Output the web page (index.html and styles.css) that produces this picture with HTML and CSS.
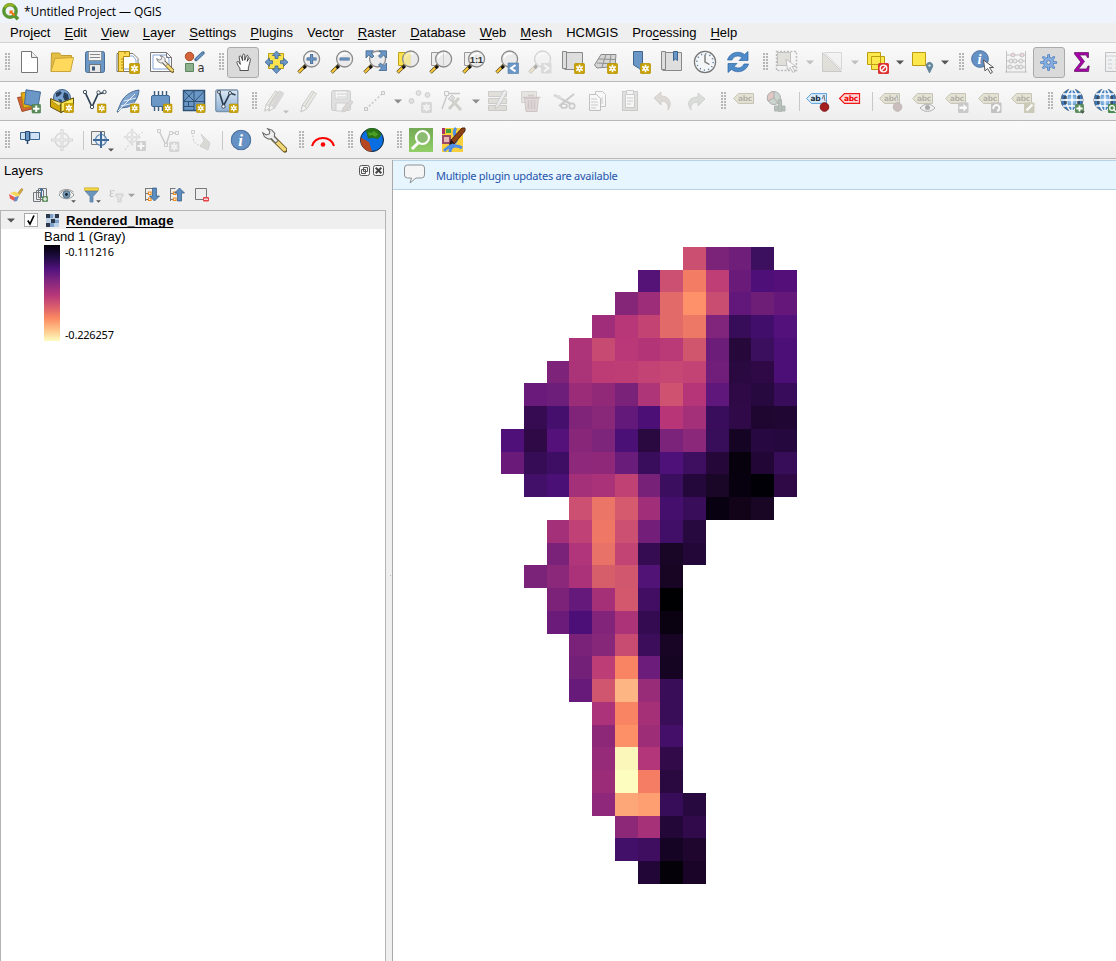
FILE: index.html
```html
<!DOCTYPE html>
<html lang="en">
<head>
<meta charset="utf-8">
<title>*Untitled Project — QGIS</title>
<link rel="stylesheet" href="styles.css">
</head>
<body>
<svg class="defs" aria-hidden="true">
  <defs>
    <linearGradient id="g-blue" x2="1" y2="1"><stop stop-color="#a9c6e8"/><stop offset="1" stop-color="#4878b0"/></linearGradient>
    <linearGradient id="g-pale" x2="0" y2="1"><stop stop-color="#dce8f5"/><stop offset="1" stop-color="#8fb0d6"/></linearGradient>
    <linearGradient id="g-green" x2="0" y2="1"><stop stop-color="#74a956"/><stop offset="1" stop-color="#92cf67"/></linearGradient>
    <radialGradient id="g-globe"><stop stop-color="#b5d8fb"/><stop offset="1" stop-color="#2667ad"/></radialGradient>
    <symbol id="star" viewBox="0 0 10 10"><rect x=".3" y=".3" width="9.4" height="9.4" rx="1.4" fill="#c8a205" stroke="#b18e00" stroke-width=".6"/><path d="M5 1.5v7M2 3.2l6 3.6M8 3.2L2 6.8" stroke="#fff" stroke-width="1.5"/><circle cx="5" cy="5" r="1.9" fill="#fff"/><circle cx="5" cy="5" r=".7" fill="#c8a205"/></symbol>
    <symbol id="plus" viewBox="0 0 10 10"><rect x=".3" y=".3" width="9.4" height="9.4" rx="1.4" fill="#5a8c5a" stroke="#4c7d50" stroke-width=".6"/><path d="M5 1.6v6.8M1.6 5h6.8" stroke="#fff" stroke-width="2"/></symbol>
    <symbol id="handle-mag" viewBox="0 0 24 24"><path d="M1.5 22.5L9 15" stroke="#5f5130" stroke-width="3.4"/><path d="M1.8 22.2L7 17" stroke="#fbc832" stroke-width="2"/><path d="M6.6 16.2l2 2" stroke="#111" stroke-width="3"/></symbol>
    <symbol id="mag" viewBox="0 0 24 24"><use href="#handle-mag"/><circle cx="14.6" cy="9" r="8" fill="#e9e9e9" fill-opacity=".88" stroke="#8b8b8b" stroke-width="1.3"/><path d="M9 8a6 6 0 0 1 8-4" stroke="#fff" stroke-width="1.6" fill="none"/></symbol>
    <symbol id="tag" viewBox="0 0 24 24"><path d="M.6 9.5L5.5 4.6h15v9.8h-15z" fill="#dcdac2" stroke="#aaa892"/><text x="5" y="12.4" class="tag-text">abc</text></symbol>
    <symbol id="wrench" viewBox="0 0 24 24"><path d="M11 10l11 11" stroke="#6a5724" stroke-width="5.4" stroke-linecap="round"/><path d="M12 11l9.5 9.5" stroke="#f2d777" stroke-width="3.6" stroke-linecap="round"/><path d="M5.5.8l4 1.2 2.8 3.2-.5 3 3.6 3.8-2.4 2.4-3.8-4-3.4.2L2.300 8.400.800 4.700l3.400 2 2.800-1 .5-2.500z" fill="#eee" stroke="#666"/></symbol>
    <symbol id="pencil" viewBox="0 0 24 24"><path d="M4 23l1.500-7L15 2l4.500 2.500-9.500 15z" fill="#d9d5b6" stroke="#77756c"/><path d="M4 23l1.500-7 4.500 3.500zM8 17l9-14" fill="#fff" stroke="#77756c"/></symbol>
    <symbol id="target" viewBox="0 0 24 24"><circle cx="12" cy="12" r="7" fill="#f5f5f5" stroke="#9a9a9a" stroke-width="1.500"/><path d="M12 1v22M1 12h22" stroke="#9a9a9a" stroke-width="3"/><path d="M12 2v20M2 12h20" stroke="#eee" stroke-width="1"/></symbol>
    <symbol id="globe" viewBox="0 0 24 24"><circle cx="12" cy="11" r="11" fill="url(#g-globe)" stroke="#6b7884"/><path d="M12 0v22M1 11h22M3 5h18M3 17h18" stroke="#fff" stroke-width="1.300"/><ellipse cx="12" cy="11" rx="5.500" ry="11" fill="none" stroke="#fff" stroke-width="1.500"/><path d="M4 7h3v3H3zM4 12h3v3H4zM17 7h3v3h-3zM17 12h3v3h-3z" fill="#26303a" opacity=".65"/></symbol>
    <symbol id="cursor" viewBox="0 0 12 15"><path d="M1 1l1.500 11 2.500-2.500 3 5 2-1.300-3-4.700h4z" fill="#fff" stroke="#555"/></symbol>
    <symbol id="info" viewBox="0 0 20 20"><circle cx="10" cy="10" r="9.300" fill="#6591c4" stroke="#466d9c"/><text x="7.300" y="15.500" class="info-text">i</text></symbol>
    <symbol id="down" viewBox="0 0 8 5"><path d="M0 .5h8L4 4.500z" fill="#555"/></symbol>
  </defs>
</svg>

<header class="titlebar">
  <svg class="logo" viewBox="0 0 18 18"><circle cx="8" cy="8" r="6.200" fill="none" stroke="#589632" stroke-width="3.400"/><path d="M2.500 4.500A6.500 6.500 0 0 1 12 3" fill="none" stroke="#93b023" stroke-width="2.500"/><path d="M11 11l5 5.200" stroke="#589632" stroke-width="3.600"/><path d="M7.500 7.500h4l-1.200 1.300 3 3-1.500 1.500-3-3-1.300 1.200z" fill="#ee7913"/></svg>
  <span>*Untitled Project — QGIS</span>
</header>

<nav class="menubar">
  <span>Pro<u>j</u>ect</span><span><u>E</u>dit</span><span><u>V</u>iew</span><span><u>L</u>ayer</span><span><u>S</u>ettings</span><span><u>P</u>lugins</span><span>Vect<u>o</u>r</span><span><u>R</u>aster</span><span><u>D</u>atabase</span><span><u>W</u>eb</span><span><u>M</u>esh</span><span>HCMGIS</span><span>Pro<u>c</u>essing</span><span><u>H</u>elp</span>
</nav>

<div class="toolbar">
  <i class="grip first"></i>
  <svg class="tb" viewBox="-4 -7 33 38"><path d="M4.500 1.500h10l6 6v15h-16z" fill="#fff" stroke="#777"/><path d="M14.500 1.500v6h6" fill="#eee" stroke="#777"/></svg>
  <svg class="tb" viewBox="-4 -7 33 38"><path d="M1 21.500L1.500 3h8l2 2.500h10V9" fill="#e4bd45" stroke="#c09b30"/><path d="M1 21.500l4-13 18.500-1-3 14z" fill="#ffd95c" stroke="#c9a53b"/></svg>
  <svg class="tb" viewBox="-4 -7 33 38"><rect x="2.500" y="1.500" width="19" height="21" rx="2" fill="#6b97c7" stroke="#4a6d94"/><path d="M5.500 1.500h13v9h-13z" fill="#f3f3f3" stroke="#777" stroke-width=".6"/><path d="M7 4.500h10M7 7.500h10" stroke="#888"/><path d="M6.500 14.500h11v8h-11z" fill="#e8e8e8" stroke="#555" stroke-width=".7"/><path d="M9 16.500h3v4H9z" fill="#3d5977"/></svg>
  <svg class="tb" viewBox="-4 -7 33 38"><path d="M1 3.500h16l5 5v13H1z" fill="#fff" stroke="#777"/><path d="M4 6h13l3 4v9H4z" fill="#fff" stroke="#86a5d8"/><path d="M2.500 1.500h11v5h-6v15h-5z" fill="#fcd950" stroke="#a98816"/><path d="M5 9h2M5 12h2M5 15h2M5 18h2M9 2v2" stroke="#a98816"/><use href="#star" x="13" y="13" width="11" height="11"/></svg>
  <svg class="tb" viewBox="-4 -7 33 38"><path d="M1.500 2.500h16l5 5v14h-21z" fill="#fff" stroke="#777"/><path d="M4 5h13l3 4v10H4z" fill="#fff" stroke="#86a5d8"/><path d="M17.500 2.500v5h5" fill="none" stroke="#777"/><use href="#wrench" x="7" y="5" width="18" height="18"/></svg>
  <svg class="tb" viewBox="-4 -7 33 38"><circle cx="7.500" cy="6.500" r="4.200" fill="#d4653a" stroke="#a94a25"/><path d="M14 9.500l7-6.500" stroke="#44688f" stroke-width="3.400" stroke-linecap="round"/><path d="M14 9.500l7-6.500" stroke="#6b97c7" stroke-width="1.800"/><path d="M3.500 13.500h8v8h-8z" fill="#8db18c" stroke="#5c8561"/><text x="15.500" y="21.500" class="glyph-a">a</text></svg>
  <i class="grip"></i>
  <svg class="tb pressed" viewBox="-4 -7 33 38"><path d="M7.500 22.500v-3C5.500 17.500 4 14 3.500 12c0-1.500 2-2 3 0l1.500 2.500L6.500 5c0-2 2-2.500 2.700-.5L11 9.500V2.500c.2-2 2.500-2 2.800 0V9L16 3.500c.8-1.700 2.500-1 2.300.8L17 10.500l2-3.500c1-1.400 2.500-.5 2.200 1-.3 3-1.700 7-2.700 11v3.500z" fill="#fff" stroke="#222" transform="translate(1 0)"/></svg>
  <svg class="tb" viewBox="-4 -7 33 38"><path d="M4.500 3.500h15v15h-15z" fill="#fce34d" stroke="#bc9c10"/><g fill="#6b97c7" stroke="#3c648e" stroke-width=".8"><path d="M12.500 1l4.200 4.500H14v3h-3v-3H8.300z"/><path d="M12.500 23.500l4.200-4.500H14v-3h-3v3H8.300z"/><path d="M1 12.200L5.500 8v2.700h3v3h-3v2.700z"/><path d="M24 12.200L19.500 8v2.700h-3v3h3v2.700z"/></g></svg>
  <svg class="tb" viewBox="-4 -7 33 38"><use href="#mag" width="24" height="24"/><path d="M14.600 4v10M9.600 9h10" stroke="#41658e" stroke-width="3"/><path d="M14.600 4.600v8.800M10.200 9H19" stroke="#6b97c7" stroke-width="1.600"/></svg>
  <svg class="tb" viewBox="-4 -7 33 38"><use href="#mag" width="24" height="24"/><path d="M9.600 9h10" stroke="#41658e" stroke-width="3"/><path d="M10.200 9H19" stroke="#6b97c7" stroke-width="1.600"/></svg>
  <svg class="tb" viewBox="-4 -7 33 38"><use href="#mag" width="24" height="24"/><g fill="#6b97c7" stroke="#41658e" stroke-width=".8"><path d="M3 .800h7.500L8 3l3 3-2 2-3.200-3L3 8z"/><path d="M23.500.800H16L18.500 3l-3 3 2 2 3.200-3 2.800 3z"/><path d="M23.500 20.500H16l2.500-2.500-3-3 2-2 3.200 3 2.800-3z"/></g></svg>
  <svg class="tb" viewBox="-4 -7 33 38"><path d="M2.500 2.500h12v13h-12z" fill="#fce34d" stroke="#c0a11a"/><use href="#mag" width="24" height="24"/><path d="M8 4.500l6.500-2v13L8 14z" fill="#f3e67c" opacity=".65"/></svg>
  <svg class="tb" viewBox="-4 -7 33 38"><path d="M2.500 2.500h12v13h-12z" fill="#eee" stroke="#999"/><use href="#mag" width="24" height="24"/><path d="M14.500 3v12.500" stroke="#ccc"/></svg>
  <svg class="tb" viewBox="-4 -7 33 38"><path d="M2.500 2.500h12v13h-12z" fill="#eee" stroke="#999"/><use href="#mag" width="24" height="24"/><text x="7.800" y="12.500" class="ratio">1:1</text></svg>
  <svg class="tb" viewBox="-4 -7 33 38"><use href="#mag" width="24" height="24"/><path d="M13 13h10.500v10.500H13z" fill="#6b97c7" stroke="#4a76a6" stroke-width=".6"/><path d="M20.500 15L16 18.200l4.500 3.200" fill="none" stroke="#fff" stroke-width="2"/></svg>
  <svg class="tb off" viewBox="-4 -7 33 38"><use href="#mag" width="24" height="24"/><path d="M13 13h10.500v10.500H13z" fill="#aaa"/><path d="M16 15l4.500 3.200-4.500 3.200" fill="none" stroke="#fff" stroke-width="2"/></svg>
  <svg class="tb" viewBox="-4 -7 33 38"><path d="M1.500 1.500h4v17h-4zM5.500 2.500h16v17h-18" fill="#dedede" stroke="#888"/><use href="#star" x="13" y="13" width="11" height="11"/></svg>
  <svg class="tb" viewBox="-4 -7 33 38"><path d="M7 4.500h15l-1 12-18 1.500-2.500-3z" fill="#d5d5d5" stroke="#888"/><path d="M4.500 9l17 .5M3 13l18 1M12 4.500L8 17M17 4.500L15.500 16" stroke="#909090" fill="none"/><use href="#star" x="13" y="13" width="11" height="11"/></svg>
  <svg class="tb" viewBox="-4 -7 33 38"><path d="M6.500 1.500h9v20l-4-3.500-5-3z" fill="#6b97c7" stroke="#41658e"/><use href="#star" x="13" y="13" width="11" height="11"/></svg>
  <svg class="tb" viewBox="-4 -7 33 38"><path d="M1.500 1.500h4v18h-4zM5.500 2.500h16v18h-19" fill="#dedede" stroke="#888"/><path d="M13.500 1.500h4v9l-2-1.500-2 1.500z" fill="#6b97c7" stroke="#3c648e"/></svg>
  <svg class="tb" viewBox="-4 -7 33 38"><circle cx="12" cy="12" r="10.600" fill="#f4f6f7" stroke="#767676" stroke-width="1.200"/><circle cx="12" cy="12" r="8.200" fill="none" stroke="#527da6" stroke-width="1.500" stroke-dasharray="1.100 3.200"/><path d="M12 4.500V12l4.500 2.500" fill="none" stroke="#777" stroke-width="1.400"/></svg>
  <svg class="tb" viewBox="-4 -7 33 38"><g fill="#4f8bc8" stroke="#2d66a5" stroke-width=".7"><path d="M1.500 10C3 3.500 12-.5 18.500 4.500L22 1.500v9h-9l3-3C11.500 4.500 7.500 6.500 6 10z"/><path d="M22.500 14C21 20.500 12 24.500 5.500 19.500L2 22.500v-9h9l-3 3c4.500 3 8.500 1 10-2.500z"/></g></svg>
  <i class="grip"></i>
  <svg class="tb off" viewBox="-4 -7 33 38"><path d="M1.500 1.500h20v19h-20z" fill="none" stroke="#444" stroke-dasharray="2 1.500" stroke-width="1.500"/><path d="M2.500 2.500h13v13h-13z" fill="#bcb693" stroke="#555"/><use href="#cursor" x="10" y="8" width="12" height="15"/></svg><svg class="arrow off" viewBox="0 0 12 38"><use href="#down" x="2" y="17" width="8" height="5"/></svg>
  <svg class="tb off" viewBox="-4 -7 33 38"><path d="M2.500 2.500v19h19z" fill="#bcb693" stroke="#777"/><path d="M4.500 2.500h17v17z" fill="#eee" stroke="#999"/></svg><svg class="arrow off" viewBox="0 0 12 38"><use href="#down" x="2" y="17" width="8" height="5"/></svg>
  <svg class="tb" viewBox="-4 -7 33 38"><path d="M2.500 2.500h13v12h-13zM6.500 6.500h13v13h-13z" fill="#fce74d" stroke="#bc9c10"/><rect x="13" y="13" width="11" height="11" rx="1.500" fill="#d33"/><circle cx="18.500" cy="18.500" r="3.300" fill="none" stroke="#fff" stroke-width="1.300"/><path d="M16.300 20.700l4.400-4.400" stroke="#fff" stroke-width="1.300"/></svg><svg class="arrow" viewBox="0 0 12 38"><use href="#down" x="2" y="17" width="8" height="5"/></svg>
  <svg class="tb" viewBox="-4 -7 33 38"><path d="M2.500 2.500h13v13h-13z" fill="#fce74d" stroke="#bc9c10"/><path d="M19.500 23l-3-6a3.300 3.300 0 1 1 6 0z" fill="#65879b" stroke="#4b6f85" stroke-width=".6"/><circle cx="19.500" cy="15.600" r="1.200" fill="#d9e5ec"/></svg><svg class="arrow" viewBox="0 0 12 38"><use href="#down" x="2" y="17" width="8" height="5"/></svg>
  <i class="grip"></i>
  <svg class="tb" viewBox="-4 -7 33 38"><use href="#info" x="0" y="0" width="18" height="18"/><use href="#cursor" x="11.500" y="9" width="12" height="15"/></svg>
  <svg class="tb off2" viewBox="-4 -7 33 38"><path d="M2.500 1v21M21.500 1v21M1 22h22M2 5h20M2 11h20M2 17h20" stroke="#777" fill="none"/><g fill="#ddd" stroke="#777"><circle cx="9" cy="5" r="2" fill="#eab"/><circle cx="18" cy="5" r="2" fill="#eab"/><circle cx="7" cy="11" r="2"/><circle cx="11" cy="11" r="2"/><circle cx="17" cy="11" r="2"/><circle cx="6" cy="17" r="2"/><circle cx="13" cy="17" r="2"/><circle cx="17" cy="17" r="2"/></g></svg>
  <svg class="tb pressed" viewBox="-4 -7 33 38"><g stroke="#3d74ba" stroke-width="3.600" stroke-linecap="round"><path d="M12 2.500v19M2.500 12h19M5.300 5.300l13.400 13.400M5.300 18.700L18.700 5.300"/></g><circle cx="12" cy="12" r="6.800" fill="#88afe0" stroke="#3d74ba"/><g stroke="#88afe0" stroke-width="1.900" stroke-linecap="round"><path d="M12 2.500v19M2.500 12h19M5.300 5.300l13.400 13.400M5.300 18.700L18.700 5.300"/></g><circle cx="12" cy="12" r="2.500" fill="#dcdcdc" stroke="#3d74ba"/></svg>
  <svg class="tb" viewBox="-4 -7 33 38"><path d="M4.500 2.500h14v5h-1.200l-1-2.500H9.500l5 6.500-6 7.500h8l1.500-3h1.200l-.7 5.500h-14v-1.500l6.300-8L4.500 4z" fill="#a600a6" stroke="#68206c" stroke-width=".8"/></svg>
  <svg class="tb off2" viewBox="-4 -7 33 38"><path d="M2.500 2.500h20v19h-20z" fill="#eee" stroke="#777"/><path d="M3 6h18M5 10h4m3 0h8M5 14h4m3 0h8M5 18h4m3 0h8" stroke="#89a"/></svg>
</div>

<div class="toolbar">
  <i class="grip first"></i>
  <svg class="tb" viewBox="-4 -7 33 38"><path d="M.500 8.500l13-2 3 13-11.500 3z" fill="#d36636" stroke="#a24a24"/><path d="M4 4l12-2 2 15-11.500 2z" fill="#e6ae12" stroke="#a88011"/><path d="M9 .800L23.500 3 21 18 7.500 15z" fill="#6b97c7" stroke="#426c99"/><use href="#plus" x="14.500" y="15" width="9.500" height="9.500"/></svg>
  <svg class="tb" viewBox="-4 -7 33 38"><circle cx="12" cy="9" r="8.500" fill="#7ba4d2" stroke="#44658b"/><path d="M6 4l4-2 2 2-3 3-3 1zM14 3l4 2 1 5-4 2-2-4zM8 10l4 1-1 4z" fill="#28405e"/><path d="M.500 9.500L11 14v9.500L.5 18zM11 14l12.500-5v8L11 23.500z" fill="#d3a90a" stroke="#665417"/><path d="M11 14l12.500-5v8L11 23.500z" fill="#f9e956" stroke="#665417"/><path d="M11 14L9 17 .5 11" fill="#f8e87e" stroke="#8f7820" stroke-width=".6"/><use href="#star" x="14" y="14" width="10" height="10"/></svg>
  <svg class="tb" viewBox="-4 -7 33 38"><path d="M2 3l7 15 6-13 7-1.500" fill="none" stroke="#2d4053" stroke-width="1.700"/><g fill="#fff" stroke="#3c4b59"><circle cx="2" cy="3" r="1.700"/><circle cx="9" cy="18" r="1.700"/><circle cx="15.500" cy="3.500" r="1.700"/><circle cx="21.500" cy="3" r="1.700"/></g><use href="#star" x="14" y="14.500" width="9.500" height="9.500"/></svg>
  <svg class="tb" viewBox="-4 -7 33 38"><path d="M1 23L4 16C7 7 15 2 23 1c-.5 7-4 14-11 17l-7 1-3.500 4.500" fill="url(#g-blue)" stroke="#4a6f98"/><path d="M2 22L19 5M5 17l13-3M8 12l12-3" fill="none" stroke="#e5eef8"/><use href="#star" x="14" y="14.500" width="9.500" height="9.500"/></svg>
  <svg class="tb" viewBox="-4 -7 33 38"><path d="M5.500 2v20M9.500 2v20M13.500 2v20M17.500 2v20" stroke="#3d5c7d" stroke-width="1.400"/><rect x="2.500" y="6.500" width="18" height="11" rx="1.500" fill="#6b97c7" stroke="#3d6691"/><use href="#star" x="14" y="14.500" width="9.500" height="9.500"/></svg>
  <svg class="tb" viewBox="-4 -7 33 38"><path d="M1.500 1.500h21v20h-21z" fill="#6b97c7" stroke="#2f5275" stroke-width="1.500"/><path d="M12 1.500v20M1.500 12.500h21M1.500 1.500l11 11L22.500 2M12 1.500L1.500 12.500M1.500 17.500H12M6.500 12.500v5" fill="none" stroke="#2f5275"/><use href="#star" x="14" y="14.500" width="9.500" height="9.500"/></svg>
  <svg class="tb" viewBox="-4 -7 33 38"><rect x=".8" y="1" width="22" height="21.500" rx="1.500" fill="url(#g-pale)" stroke="#7c93ac" stroke-width="1.400"/><path d="M4 2l4.500 15L15 4l5.500 2" fill="none" stroke="#2d4053" stroke-width="1.700"/><g fill="#fff" stroke="#3c4b59"><circle cx="4" cy="3" r="1.500"/><circle cx="8.500" cy="17.500" r="1.700"/><circle cx="15" cy="4" r="1.500"/></g><use href="#star" x="14" y="14.500" width="9.500" height="9.500"/></svg>
  <i class="grip"></i>
  <svg class="tb off" viewBox="-4 -7 33 38"><use href="#pencil" x="-3" width="23" height="23"/><use href="#pencil" x="1" width="23" height="23"/><path d="M7 17l8-14 5 2-9 15z" fill="#a99"/><use href="#down" x="19" y="21" width="6" height="4"/></svg>
  <svg class="tb off" viewBox="-4 -7 33 38"><use href="#pencil" width="24" height="24"/></svg>
  <svg class="tb off" viewBox="-4 -7 33 38"><rect x="1.500" y="1.500" width="19" height="20" rx="2" fill="#b7b7b7" stroke="#777"/><path d="M5 2h12v8H5zM6 14h10v8H6z" fill="#f4f4f4" stroke="#888"/><path d="M7 5h9M7 8h9" stroke="#888"/><path d="M12 23l1-4 7-8 3 2-7 9z" fill="#b79c93" stroke="#888"/></svg>
  <svg class="tb off" viewBox="-4 -7 33 38"><path d="M3 20L20 4" stroke="#666" stroke-dasharray="2 2" stroke-width="1.500"/><path d="M1.500 18.500h3v3h-3zM18.500 2.500h3v3h-3z" fill="#ddd" stroke="#666"/></svg><svg class="arrow mid" viewBox="0 0 12 38"><use href="#down" x="2" y="17" width="8" height="5"/></svg>
  <svg class="tb off" viewBox="-4 -7 33 38"><g fill="#bbb" stroke="#777"><circle cx="3.500" cy="12" r="2.400"/><circle cx="10.500" cy="4" r="2.400"/><circle cx="19.500" cy="6" r="2.400"/></g><g class="gray"><use href="#star" x="13" y="13" width="11" height="11"/></g></svg>
  <svg class="tb off" viewBox="-4 -7 33 38"><path d="M6 6L1 20M6 4.500h13" fill="none" stroke="#666" stroke-width="1.300"/><path d="M3.500 2.500h4v4h-4z" fill="#eee" stroke="#666"/><path d="M8 20L18 9M9 9l11 12" stroke="#8b876d" stroke-width="3"/><path d="M7 10l4-4 3 3-4 3z" fill="#aaa" stroke="#777"/></svg><svg class="arrow mid" viewBox="0 0 12 38"><use href="#down" x="2" y="17" width="8" height="5"/></svg>
  <svg class="tb off" viewBox="-4 -7 33 38"><path d="M2.500 2.500h18v5h-18zM2.500 9.500h18v5h-18zM2.500 16.500h18v5h-18z" fill="#b8b28e" stroke="#777"/><path d="M9 20l1-4L18 1l3 2-8 14z" fill="#ddd" stroke="#777"/></svg>
  <svg class="tb off" viewBox="-4 -7 33 38"><path d="M2.500 2.500h15v11h-15z" fill="#c9c1a9" stroke="#988"/><path d="M5.500 9.500h14l-1.500 13H7z" fill="#c99" stroke="#966"/><path d="M3.500 8.500h18M9 6.500h6M9.500 11v9M12.500 11v9M15.500 11v9" stroke="#966" stroke-width="1.500"/></svg>
  <svg class="tb off" viewBox="-4 -7 33 38"><path d="M2 6l17 9M7 17L22 5" stroke="#777" stroke-width="2"/><circle cx="20" cy="17" r="2.700" fill="none" stroke="#777" stroke-width="1.700"/><path d="M1 7l10 4-3-5z" fill="#aaa"/><ellipse cx="12" cy="17" rx="3" ry="2" fill="none" stroke="#777" stroke-width="1.700"/></svg>
  <svg class="tb off" viewBox="-4 -7 33 38"><path d="M10.500 2.500h7l3 3v12h-10z" fill="#fff" stroke="#666"/><path d="M4.500 5.500h7l4 4v12h-11z" fill="#fff" stroke="#555"/><path d="M6 10h6M6 13h7M6 16h7M6 19h5M17 8v7" stroke="#777"/></svg>
  <svg class="tb off" viewBox="-4 -7 33 38"><rect x="4.500" y="2.500" width="15" height="19" fill="#b5b3a2" stroke="#777"/><path d="M7.500 5.500h9v13h-9z" fill="#fff" stroke="#777"/><path d="M8.500 1.500h7v4h-7zM9 9h6M9 12h6M9 15h4" fill="#eee" stroke="#777"/></svg>
  <svg class="tb off" viewBox="-4 -7 33 38"><path d="M3 9l7-6v4c8 0 12 7 7 14 1-6-2-9-7-9v4z" fill="#b7a08d" stroke="#977e70"/></svg>
  <svg class="tb off" viewBox="-4 -7 33 38"><path d="M21 10l-7-6v4C5 8 2 14 7 21c-1-5 2-8 7-8v4z" fill="#9eae9d" stroke="#799080"/></svg>
  <i class="grip"></i>
  <svg class="tb off3" viewBox="-4 -7 33 38"><use href="#tag" width="24" height="24"/></svg>
  <svg class="tb off3" viewBox="-4 -7 33 38"><circle cx="8" cy="9" r="6.500" fill="#b8c4bc" stroke="#888"/><path d="M8 9V2.500A6.500 6.500 0 0 0 2 12zM8 9l4 5" fill="#d5b0a8" stroke="#888"/><path d="M12.500 10.500h3v12h-3zM16 17h3v5h-3zM8.500 17h3.500v5H8.500z" fill="#98a79a" stroke="#8a9791"/></svg>
  <i class="sep"></i>
  <svg class="tb" viewBox="-4 -7 33 38"><path d="M.6 9.500L5.500 4.600h15v9.800h-15z" fill="#d8ecfc" stroke="#5aa1de"/><text x="4.500" y="12.400" class="tag-text dark">ab</text><path d="M16 10l2-4 1 6" fill="#dde" stroke="#777"/><circle cx="18.500" cy="18" r="4.300" fill="#a51e20" stroke="#7d1719"/></svg>
  <svg class="tb" viewBox="-4 -7 33 38"><path d="M.6 9.500L5.500 4.600h15v9.800h-15z" fill="#ffdada" stroke="#f01818" stroke-width="1.200"/><text x="5" y="12.400" class="tag-text red">abc</text></svg>
  <i class="sep"></i>
  <svg class="tb off3" viewBox="-4 -7 33 38"><use href="#tag" width="24" height="24"/><path d="M16 11l2-5 1 6" fill="#ddd" stroke="#999"/><circle cx="18.500" cy="18" r="4.300" fill="#b5a2a2" stroke="#a19393"/></svg>
  <svg class="tb off3" viewBox="-4 -7 33 38"><use href="#tag" width="24" height="24"/><path d="M8 19c4-5 11-5 15 0-4 4.500-11 4.500-15 0z" fill="#eee" stroke="#888"/><circle cx="15.500" cy="18.500" r="2.500" fill="#888"/></svg>
  <svg class="tb off3" viewBox="-4 -7 33 38"><use href="#tag" width="24" height="24"/><rect x="13" y="13.500" width="10.500" height="10.500" rx="1" fill="#b4b4b4"/><path d="M14.500 17.500h4V15l4 3.700-4 3.700V20h-4z" fill="#fff"/></svg>
  <svg class="tb off3" viewBox="-4 -7 33 38"><use href="#tag" width="24" height="24"/><rect x="13" y="13.500" width="10.500" height="10.500" rx="1" fill="#aaa"/><path d="M15.500 20a3 3 0 1 1 3.500 2" fill="none" stroke="#fff" stroke-width="2"/></svg>
  <svg class="tb off3" viewBox="-4 -7 33 38"><use href="#tag" width="24" height="24"/><rect x="13" y="13.500" width="10.500" height="10.500" rx="1" fill="#b8b49b"/><path d="M15.500 21.500l6-6" stroke="#fff" stroke-width="2.400"/></svg>
  <i class="grip"></i>
  <svg class="tb" viewBox="-4 -7 33 38"><use href="#globe" width="24" height="24"/><use href="#plus" x="15" y="15" width="9" height="9"/><use href="#down" x="20" y="22" width="5" height="3"/></svg>
  <svg class="tb" viewBox="-4 -7 33 38"><use href="#globe" width="24" height="24"/><rect x="15" y="15" width="9" height="9" rx="1" fill="#4c8a50"/><circle cx="19" cy="19" r="2.300" fill="none" stroke="#fff" stroke-width="1.300"/><path d="M20.500 20.500l2.500 2.500" stroke="#fff" stroke-width="1.300"/></svg>
</div>

<div class="toolbar third">
  <i class="grip first"></i>
  <svg class="tb" viewBox="-4 -7 33 38"><path d="M3.500 4.500h5v7h-5zM13 4.500h9.500v7H13z" fill="#cfe2f7" stroke="#3d668f"/><path d="M8.500 3.500h4v9h-4z" fill="#6b97c7" stroke="#24496f"/><path d="M10.500 13v3" stroke="#24496f" stroke-width="1.500"/></svg>
  <svg class="tb off" viewBox="-4 -7 33 38"><use href="#target" width="24" height="24"/></svg>
  <i class="sep"></i>
  <svg class="tb" viewBox="-4 -7 33 38"><path d="M1.500 3.500h13v13h-13z" fill="#eee" stroke="#777"/><circle cx="11" cy="12" r="5.500" fill="#e3edf8" fill-opacity=".7" stroke="#527eae" stroke-width="1.200"/><path d="M11 4v16M3 12h16" stroke="#3d6999" stroke-width="2"/><use href="#down" x="18" y="20" width="6" height="4"/></svg>
  <svg class="tb off" viewBox="-4 -7 33 38"><path d="M2 22L10 11l10-7" stroke="#777" stroke-dasharray="2 2" fill="none"/><use href="#target" x="0" y="0" width="18" height="18"/><rect x="13" y="13" width="10" height="10" rx="1" fill="#888"/><path d="M18 14.500v7M14.500 18h7" stroke="#fff" stroke-width="2"/></svg>
  <svg class="tb off" viewBox="-4 -7 33 38"><path d="M3 3l7 14 4-12h7" fill="none" stroke="#777" stroke-width="1.500"/><path d="M1.500 1.500h3v3h-3zM8.500 15.500h3v3h-3zM13.500 3.500h3v3h-3zM19.500 3.500h3v3h-3z" fill="#eee" stroke="#777"/><g class="gray"><use href="#star" x="13" y="13.500" width="10.500" height="10.500"/></g></svg>
  <svg class="tb off" viewBox="-4 -7 33 38"><path d="M3 4l2 10 7 5" fill="none" stroke="#777" stroke-dasharray="2 1.500"/><path d="M2.500 2.500h3v3h-3z" fill="#eee" stroke="#777"/><path d="M12 6l5 5 4 4-2 7-8-4 4-5z" fill="#a9a48e" stroke="#888"/></svg>
  <i class="sep"></i>
  <svg class="tb" viewBox="-4 -7 33 38"><use href="#info" x="1.500" y="1.500" width="21" height="21"/></svg>
  <svg class="tb" viewBox="-4 -7 33 38"><use href="#wrench" width="25" height="25"/></svg>
  <i class="grip"></i>
  <svg class="tb" viewBox="-4 -7 33 38"><path d="M1 18A11.300 10.500 0 0 1 23 18" fill="none" stroke="#f00" stroke-width="2"/><circle cx="12" cy="16.500" r="2.300" fill="#f00"/></svg>
  <i class="grip"></i>
  <svg class="tb" viewBox="-4 -7 33 38"><circle cx="12" cy="12" r="11.500" fill="#0a6ee0" stroke="#123"/><path d="M6 2.200c4-3 9-3 13 .5L21.500 7 18 11l-5-1-5 .500z" fill="#297316"/><path d="M8 4l3 1 3-2 4 3-2 3-4-2-3 1" fill="#4c9d25"/><path d="M.700 9.500L9 14l3 9.500C5 24 0 18 .7 9.500z" fill="#b64821"/></svg>
  <i class="grip"></i>
  <svg class="tb" viewBox="-4 -7 33 38"><path d="M0 0h24v24H0z" fill="url(#g-green)"/><path d="M3 21l6-6" stroke="#fff" stroke-width="3"/><circle cx="13.500" cy="9.500" r="6.500" fill="#8bbc71" stroke="#fff" stroke-width="2.200"/></svg>
  <svg class="tb" viewBox="-4 -7 33 38"><path d="M0 0h21v24H0z" fill="#f9cf3c"/><path d="M0 0h3v6H0zM4 11h3v3H4z" fill="#ad3565"/><path d="M0 7h9v9H0z" fill="#9d4a68"/><path d="M4 1h5v4H4z" fill="#44a13e"/><path d="M2 9h5v5H2z" fill="#e8b7b0"/><path d="M14 0c-5 6 2 9 0 13s-8 5-12 10M8 24c0-6 6-8 12-4" fill="none" stroke="#4d8ee6" stroke-width="3"/><path d="M9 12l3 4L23 3V0h-3z" fill="#8e4016" stroke="#4f2410"/><path d="M9 11l3 4-5 2z" fill="#2c1b12"/></svg>
</div>

<main class="workspace">
  <section class="layers">
    <div class="dock-title"><span>Layers</span>
      <svg class="dock-btn" viewBox="0 0 11 11"><rect x=".5" y=".5" width="10" height="10" rx="2" fill="#f5f5f5" stroke="#555"/><path d="M4.500 2.500h4v4h-4zM2.500 4.500h4v4h-4z" fill="none" stroke="#555"/></svg>
      <svg class="dock-btn" viewBox="0 0 11 11"><rect x=".5" y=".5" width="10" height="10" rx="2" fill="#f5f5f5" stroke="#555"/><path d="M2.700 2.700l5.600 5.600M8.300 2.700L2.700 8.300" stroke="#444" stroke-width="2"/></svg>
    </div>
    <div class="dock-tools">
      <svg class="lt" viewBox="0 0 16 16"><path d="M9 7l4.500-5.500 1.500 1L11 8.500z" fill="#d9ae3e" stroke="#9b7326" stroke-width=".6"/><path d="M2 6l5-1.500 5 3-2 3z" fill="#f8d65b"/><path d="M1 7l8 4.500-2 3-5-3z" fill="#ea5a50"/><path d="M7 10l4-1-2 5-3 .5z" fill="#658cca"/></svg>
      <svg class="lt" viewBox="0 0 16 16"><path d="M.500 5.500h7v9h-7zM3.500 3.500h7v9h-7zM5.500 1.500h8v9h-8z" fill="#e8eef4" stroke="#777"/><path d="M8.500 1v9M6.500 3.500l2-2 2 2" fill="none" stroke="#3e72a9"/><use href="#plus" x="9" y="9" width="6" height="6"/></svg>
      <svg class="lt wide" viewBox="0 0 18 16"><path d="M1 8c4-6 11-6 15 0-4 5-11 5-15 0z" fill="#f4f4f4" stroke="#8a9398"/><circle cx="8.500" cy="7.500" r="3.600" fill="#7298b5" stroke="#5b7180"/><circle cx="8.500" cy="7.500" r="1.400" fill="#16222e"/><path d="M1 5.500C5 1.500 11 1.500 15.500 5" fill="none" stroke="#999"/><use href="#down" x="13" y="13" width="5" height="3"/></svg>
      <svg class="lt wide" viewBox="0 0 18 16"><path d="M2 4l5 5.500V15h3V9.500L15 4z" fill="#6995bd" stroke="#52779d" stroke-width=".7"/><path d="M1.500.800h14v2.700h-14z" fill="#f2d63f" stroke="#bb9f26" stroke-width=".6"/><use href="#down" x="13" y="13" width="5" height="3"/></svg>
      <svg class="lt off" viewBox="0 0 16 16"><text x="1" y="10" class="eps">ε</text><path d="M8 7h7v2l-2 2v4h-3v-4L8 9z" fill="#ccc" stroke="#888"/></svg>
      <svg class="la" viewBox="0 0 12 16"><use href="#down" x="2" y="6" width="7" height="5" opacity=".5"/></svg>
      <svg class="lt" viewBox="0 0 16 16"><path d="M1.500 1v13M1.500 1.500h9M1.500 6.500h4M1.500 12.500h4" fill="none" stroke="#777"/><path d="M4.500 5h2.500v2.500H4.500zM4.500 11h2.500v2.500H4.500z" fill="#fff" stroke="#f28a1c" stroke-width="1.200"/><path d="M8.500 1h4v8h3l-5 5-5-5h3z" fill="#5d8dc0" stroke="#31577f" stroke-width=".7"/></svg>
      <svg class="lt" viewBox="0 0 16 16"><path d="M1.500 1v13M1.500 1.500h5M1.500 6.500h4M1.500 12.500h4" fill="none" stroke="#777"/><path d="M4.500 5h2.500v2.500H4.500zM4.500 11h2.500v2.500H4.500z" fill="#fff" stroke="#f28a1c" stroke-width="1.200"/><path d="M8.500 14h4V6h3l-5-5-5 5h3z" fill="#5d8dc0" stroke="#31577f" stroke-width=".7"/></svg>
      <svg class="lt" viewBox="0 0 16 16"><path d="M1.500 1.500h11v11h-11z" fill="#eee" stroke="#777"/><rect x="9" y="10" width="6" height="4.500" rx="1" fill="#e8424a"/><path d="M10 12.200h4" stroke="#fff" stroke-width="1.200"/></svg>
    </div>
    <div class="tree">
      <div class="layer-row">
        <svg class="twist" viewBox="0 0 8 5"><path d="M0 .500h8L4 4.500z" fill="#555"/></svg>
        <span class="check"><svg viewBox="0 0 12 12"><path d="M2.800 6.500L5 10l4-8.500" fill="none" stroke="#000" stroke-width="1.700"/></svg></span>
        <svg class="raster" viewBox="0 0 13 13"><path d="M0 0h13v13H0z" fill="#bcd0e6"/><path d="M0 0h4v4H0zM9 0h4v4H9zM5 5h4v4H5zM0 9h4v4H0z" fill="#2b394a"/><path d="M4 0h3v4H4zM4 9h4v4H4zM9 6h4v3H9z" fill="#7da0c8"/></svg>
        <b>Rendered_Image</b>
      </div>
      <div class="band">Band 1 (Gray)</div>
      <div class="legend"><div class="ramp"></div><div class="ramp-labels"><span>-0.111216</span><span>-0.226257</span></div></div>
    </div>
  </section>
  <div class="splitter"></div>
  <section class="canvas">
    <div class="message">
      <svg viewBox="0 0 22 20"><path d="M3.500 1h14q3 0 3 3v7q0 3-3 3H12l-6 5 1.500-5h-4q-3 0-3-3V4q0-3 3-3z" fill="#f5f5f5" stroke="#8d9397"/></svg>
      <span>Multiple plugin updates are available</span>
    </div>
    <div class="raster-map" id="map"></div>
  </section>
</main>
<script src="map.js"></script>
</body>
</html>
```
FILE: styles.css
```css
* { box-sizing: border-box; }
body {
  margin: 0;
  width: 1116px;
  height: 961px;
  overflow: hidden;
  display: flex;
  flex-direction: column;
  background: #efefef;
  color: #000;
  font: 13px "Liberation Sans", Arial, sans-serif;
}
svg { display: block; flex: none; }
.defs { position: absolute; width: 0; height: 0; }

.titlebar {
  height: 23px;
  flex: none;
  display: flex;
  align-items: center;
  gap: 4px;
  padding-left: 2px;
  background: #eff3fb;
  font: 12px "Open Sans", "Noto Sans", sans-serif;
}
.titlebar span { letter-spacing: -0.1px; }
.logo { width: 18px; height: 18px; }

.menubar {
  height: 20px;
  flex: none;
  display: flex;
  align-items: center;
  gap: 14px;
  padding-left: 10px;
  border-bottom: 1px solid #d2d2d2;
  white-space: nowrap;
}
.menubar u { text-underline-offset: 2px; text-decoration-thickness: 1px; text-decoration-skip-ink: none; }

.toolbar {
  height: 39px;
  flex: none;
  display: flex;
  overflow: hidden;
  background: linear-gradient(#fafafa, #eee);
  border-bottom: 1px solid #b8b8b8;
}
.toolbar.third { height: 38px; }
.tb { width: 33px; height: 38px; }
.arrow { width: 12px; height: 38px; }
.grip {
  flex: none;
  width: 16px;
  height: 18px;
  margin-top: 10px;
  background: radial-gradient(circle at 1px 1px, #b5b5b5 0.7px, transparent 1px) 8px 0 / 3px 3px no-repeat;
  background-repeat: repeat;
  background-clip: content-box;
  padding: 0 3px 0 8px;
}
.grip.first { width: 13px; padding: 0 3px 0 5px; background-position: 5px 0; }
.sep { flex: none; width: 7px; height: 19px; margin-top: 10px; border-left: 1px solid #c8c8c8; background-clip: content-box; transform: translateX(4px); }
.pressed {
  background: linear-gradient(#a8a8a8, #a8a8a8) 0 0 / 0 0 no-repeat;
  border-radius: 3px;
  clip-path: inset(0);
  background: #dadada;
  margin: 4px 1px 0 0;
  width: 32px;
  height: 31px;
  border: 1px solid #aaa;
}
.off { opacity: 0.32; filter: saturate(0.5); }
.off2 { opacity: 0.4; }
.off3 { opacity: 0.65; }
.mid { opacity: 0.65; }
.gray { filter: grayscale(1); }
.tag-text { font: bold 7.5px "DejaVu Sans", sans-serif; letter-spacing: -0.4px; fill: #8d8c80; }
.tag-text.dark { fill: #222f40; }
.tag-text.red { fill: #e00; }
.ratio { font: bold 9.5px "Liberation Sans", sans-serif; letter-spacing: -0.2px; fill: #333; }
.glyph-a { font: 11.5px "DejaVu Sans", sans-serif; fill: #333; }
.info-text { font: italic bold 16px "Liberation Serif", serif; fill: #fff; }
.eps { font: 14px "Liberation Serif", serif; fill: #555; }

.workspace { flex: 1; display: flex; min-height: 0; }
.layers { width: 386px; flex: none; display: flex; flex-direction: column; }
.dock-title { display: flex; align-items: center; gap: 3px; height: 22px; padding: 0 2px 0 4px; }
.dock-title span { margin-right: auto; }
.dock-btn { width: 11px; height: 11px; }
.dock-tools { display: flex; align-items: center; height: 29px; padding: 0 0 2px 8px; }
.lt { width: 16px; height: 16px; margin-right: 9px; }
.lt.wide { width: 18px; margin-right: 7px; }
.lt.off { margin-right: 2px; }
.la { width: 12px; height: 16px; margin-right: 6px; }
.tree { flex: 1; background: #fff; border: 1px solid #b4b4b4; border-bottom: 0; }
.layer-row { display: flex; align-items: center; height: 18px; padding-left: 6px; background: #efefef; }
.twist { width: 8px; height: 5px; }
.check { width: 14px; height: 14px; margin: 0 8px 0 9px; background: #fff; border: 1px solid #aaa; }
.check svg { width: 12px; height: 12px; }
.raster { width: 13px; height: 13px; margin-right: 7px; }
.layer-row b { text-decoration: underline; text-underline-offset: 2px; text-decoration-skip-ink: none; letter-spacing: 0.2px; transform-origin: left; }
.band { height: 16px; line-height: 16px; padding-left: 43px; }
.legend { display: flex; gap: 5px; height: 96px; padding-left: 43px; }
.ramp { width: 16px; background: linear-gradient(#030109, #1d0c40 12%, #51127c 25%, #83267f 38%, #b63679 52%, #e0666a 67%, #fb8861 76%, #fec287 88%, #fcfdbf); }
.ramp-labels { display: flex; flex-direction: column; justify-content: space-between; font: 11px/13px "Noto Sans", sans-serif; letter-spacing: -0.2px; }

.splitter { flex: none; width: 6px; background: radial-gradient(circle, #bbb 0.7px, transparent 1px) 3px 415px / 3px 3px no-repeat; }
.canvas { flex: 1; margin-top: 1px; border-left: 1px solid #aaa; background: #fff; }
.message {
  display: flex;
  align-items: center;
  gap: 10px;
  height: 30px;
  padding-left: 11px;
  background: #e7f5fe;
  border: solid #b9d3e6;
  border-width: 1px 0;
  color: #2554ac;
  font: 11px "Noto Sans", sans-serif;
}
.message svg { width: 22px; height: 20px; margin-top: -3px; }
.message span { letter-spacing: -0.25px; }
.raster-map {
  display: grid;
  margin: 57px 0 0 108px;
  grid-template-columns: 23px 23px 22px 23px 23px 23px 22px 23px 23px 23px 22px 23px 23px;
  grid-template-rows: repeat(6, 23px 22px 23px 23px) 23px 22px 23px 23px;
}
```
FILE: map.js
```js
// Each row: first column, then the cell colours from left to right.
const rows = [
  [8, "cb4f70 7b2279 6f1e7a 3d0f5f"],
  [6, "561377 cc5071 f27d64 bf3e76 6a1a78 4e1078 541078"],
  [5, "862678 9e2d79 e26a68 ff916a c94c71 62177b 6f1e78 651879"],
  [4, "9f2d79 b83778 c34473 e26b69 ed7865 81247b 370d5a 420e6c 52117b"],
  [3, "ae347a c74a72 ba3878 b43478 ba3a78 d0566e 6c1d7a 26083a 3b0e5e 4c0f78"],
  [2, "7d237a ab3378 bd3c76 be3d75 c24374 c64773 c24374 701e7a 2a0940 2f0946 4c0f77"],
  [1, "6a1a7b 6d1d7a 9a2c78 912978 7a227a ae3578 cf5370 b63578 60177c 2f0945 270940 380c5a"],
  [1, "360b52 450f6e 80247a 892779 62197a 4b0f76 b83678 a5307a 390c5c 300a48 1e0630 200633"],
  [0, "501079 2e0945 541179 88267a 7d247b 4b1076 2a0940 7b227a 8c2879 380d5a 150424 270840 25083d"],
  [0, "6a1b7a 370c57 3e0e64 8d287a 90287a 6a1c7b 390d5b 4e1079 3e0f60 250839 07010e 220736 370c58"],
  [1, "420f69 4a1075 a4307a a93278 c04275 772179 3c0e5f 24073b 1a0627 07010f 010006 2f0945"],
  [3, "cb5072 eb7566 d55a6d a02e78 440f6d 3a0d5a 080111 120319 190524"],
  [2, "a5307a c04175 ee7865 cb5072 731f79 420f68 270940"],
  [2, "7a227a b0357a e97268 c24474 350c51 190525 220738"],
  [1, "7b2379 8b2879 ab3278 d65e6b d1576e 521377 180524"],
  [2, "7c2279 65197a a63078 d3586d 410e63 000003"],
  [2, "6b1c7a 4c0f77 82247a ac3378 340b50 0a0211"],
  [3, "7a227a 862779 c84b72 3c0d5b 180525"],
  [3, "732079 bd3d76 f98463 6c1c7b 150422"],
  [3, "681a7b cf566e fdb584 992c79 3a0d59"],
  [4, "ac3379 f98463 a53078 390d58"],
  [4, "8d2879 fe9068 9e2d78 430f69"],
  [4, "952b79 fbf7ba b3357a 320a4a"],
  [4, "9b2d78 fcfdbf f57d64 290940"],
  [4, "8f287a fda678 fe9f72 370c58 270940"],
  [5, "8d2879 a73178 230739 300a4b"],
  [5, "420f69 3f0e61 150423 1e062e"],
  [6, "220637 050109 1a0528"]
];
const map = document.getElementById("map");
rows.forEach(([start, colours], r) => {
  colours.split(" ").forEach((colour, c) => {
    const cell = document.createElement("i");
    cell.style.gridArea = `${r + 1} / ${start + c + 1}`;
    cell.style.background = `#${colour}`;
    map.append(cell);
  });
});
```
